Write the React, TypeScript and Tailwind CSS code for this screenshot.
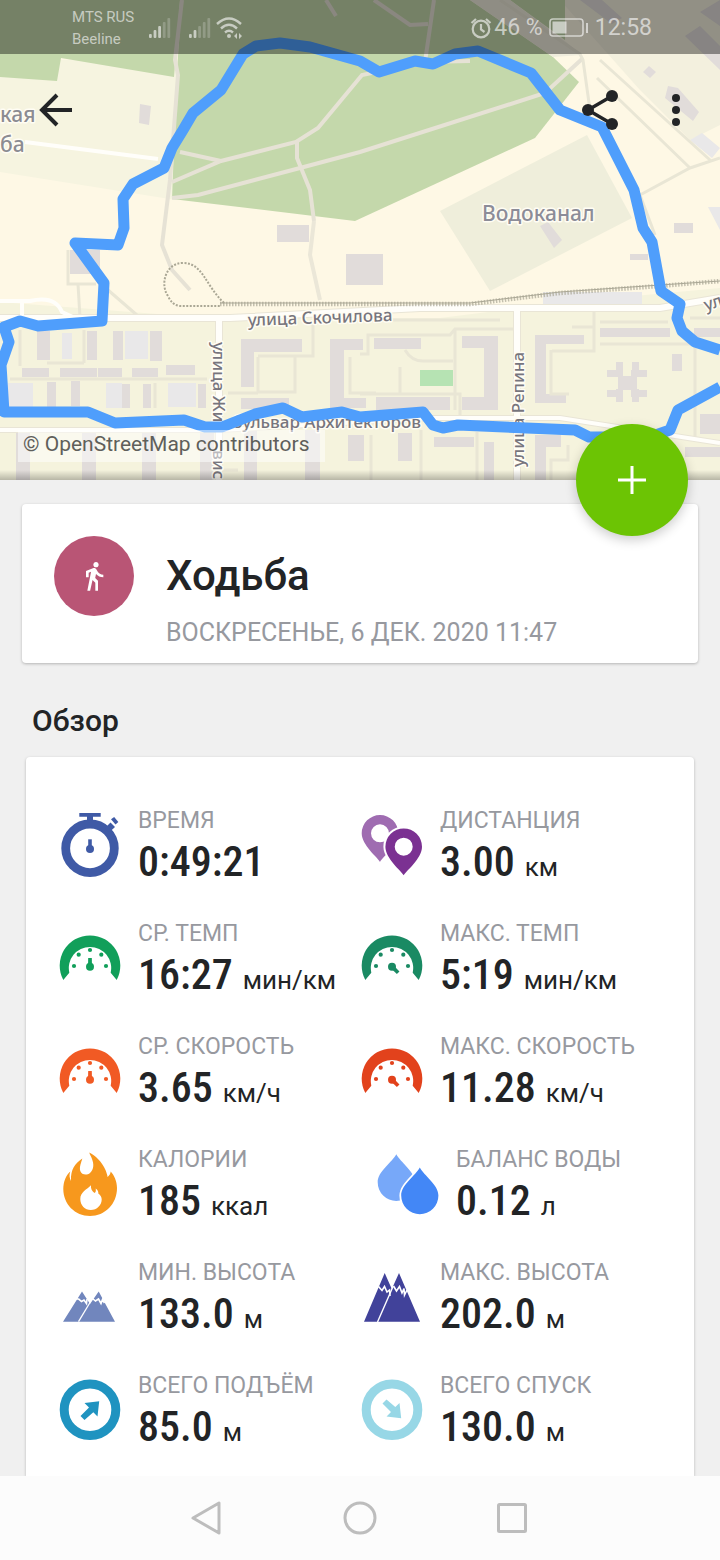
import type { ReactNode } from 'react'
import { MdDirectionsWalk } from 'react-icons/md'

type Stat = {
  label: string
  value: string
  unit?: string
  icon: ReactNode
  indent?: boolean
}

const stats: Stat[] = [
  { label: 'ВРЕМЯ', value: '0:49:21', icon: <Stopwatch /> },
  { label: 'ДИСТАНЦИЯ', value: '3.00', unit: 'км', icon: <Pins /> },
  { label: 'СР. ТЕМП', value: '16:27', unit: 'мин/км', icon: <Gauge color="#119f5a" /> },
  { label: 'МАКС. ТЕМП', value: '5:19', unit: 'мин/км', icon: <Gauge color="#1a8a63" max /> },
  { label: 'СР. СКОРОСТЬ', value: '3.65', unit: 'км/ч', icon: <Gauge color="#f15a24" /> },
  { label: 'МАКС. СКОРОСТЬ', value: '11.28', unit: 'км/ч', icon: <Gauge color="#e2421c" max /> },
  { label: 'КАЛОРИИ', value: '185', unit: 'ккал', icon: <Flame /> },
  { label: 'БАЛАНС ВОДЫ', value: '0.12', unit: 'л', icon: <Drops />, indent: true },
  { label: 'МИН. ВЫСОТА', value: '133.0', unit: 'м', icon: <LowMountains /> },
  { label: 'МАКС. ВЫСОТА', value: '202.0', unit: 'м', icon: <HighMountains /> },
  { label: 'ВСЕГО ПОДЪЁМ', value: '85.0', unit: 'м', icon: <Slope color="#1f93c0" /> },
  { label: 'ВСЕГО СПУСК', value: '130.0', unit: 'м', icon: <Slope color="#97d7e6" down /> },
]

export default function App() {
  return (
    <div className="flex min-h-screen flex-col bg-[#f0f0f0] font-['Roboto',sans-serif] text-[#222426]">
      <header className="relative h-[480px] shrink-0">
        <RouteMap />
        <div className="relative">
          <StatusBar />
          <nav className="flex items-center pt-7 pr-5 pl-8">
            <button type="button" aria-label="Назад" className="h-14 w-12">
              <svg viewBox="0 0 48 56" className="h-14 w-12" fill="none" stroke="#222426" strokeWidth="4">
                <path d="M40 28H11M25 13L10 28L25 43" />
              </svg>
            </button>
            <button type="button" aria-label="Поделиться" className="ml-auto h-14 w-12">
              <svg viewBox="0 0 48 56" className="h-14 w-12" fill="#222426">
                <path d="M36 14L12 28L36 42" fill="none" stroke="#222426" strokeWidth="3.4" />
                <circle cx="36" cy="14" r="6" />
                <circle cx="12" cy="28" r="6" />
                <circle cx="36" cy="42" r="6" />
              </svg>
            </button>
            <button type="button" aria-label="Ещё" className="ml-7 h-14 w-12">
              <svg viewBox="0 0 48 56" className="h-14 w-12" fill="#222426">
                <circle cx="24" cy="16" r="4" />
                <circle cx="24" cy="28" r="4" />
                <circle cx="24" cy="40" r="4" />
              </svg>
            </button>
          </nav>
        </div>
        <a
          href="#copyright"
          className="absolute bottom-[18px] left-[18px] bg-white/50 pr-4 pb-1 pl-[5px] text-[21px] leading-7 text-[#5f5f5b]"
        >
          © OpenStreetMap contributors
        </a>
        <div className="absolute inset-x-0 bottom-0 h-2.5 bg-linear-to-b from-transparent to-black/25" />
        <button
          type="button"
          aria-label="Добавить"
          className="absolute right-8 -bottom-14 z-10 flex size-28 items-center justify-center rounded-full bg-[#6cc404] shadow-[0_4px_12px_rgba(0,0,0,0.2)]"
        >
          <svg viewBox="0 0 28 28" className="size-7" stroke="#fff" strokeWidth="3">
            <path d="M14 0V28M0 14H28" />
          </svg>
        </button>
      </header>

      <main className="flex flex-1 flex-col">
        <section className="mx-[22px] mt-6 flex items-start gap-8 rounded bg-white px-8 pt-8 pb-3.5 shadow-[0_1px_3px_rgba(0,0,0,0.25)]">
          <div className="flex size-20 items-center justify-center rounded-full bg-[#b95575] text-white">
            <MdDirectionsWalk className="size-8" />
          </div>
          <div className="pt-3.5">
            <h1 className="text-[42px] leading-[52px] font-medium">Ходьба</h1>
            <p className="mt-3.5 text-[25px] leading-[33px] text-[#97999f]">ВОСКРЕСЕНЬЕ, 6 ДЕК. 2020 11:47</p>
          </div>
        </section>

        <h2 className="mt-[42px] px-8 text-[30px] leading-8 font-medium">Обзор</h2>

        <section className="mx-[26px] mt-5 flex-1 rounded-t bg-white px-8 pt-[49px] shadow-[0_1px_3px_rgba(0,0,0,0.25)]">
          <dl className="grid grid-cols-2 gap-y-[33px]">
            {stats.map((stat) => (
              <StatCell key={stat.label} stat={stat} />
            ))}
          </dl>
        </section>
      </main>

      <footer className="relative flex h-[84px] shrink-0 items-center justify-center gap-[104px] bg-[#fcfcfc]">
        <button type="button" aria-label="Назад" className="size-12">
          <svg viewBox="0 0 48 48" className="size-12" fill="none" stroke="#bdbdbd" strokeWidth="3" strokeLinejoin="round">
            <path d="M35 9V39L9 24Z" />
          </svg>
        </button>
        <button type="button" aria-label="Домой" className="size-12">
          <svg viewBox="0 0 48 48" className="size-12" fill="none" stroke="#bdbdbd" strokeWidth="3">
            <circle cx="24" cy="24" r="15" />
          </svg>
        </button>
        <button type="button" aria-label="Недавние" className="size-12">
          <svg viewBox="0 0 48 48" className="size-12" fill="none" stroke="#bdbdbd" strokeWidth="3">
            <rect x="10.5" y="10.5" width="27" height="27" rx="1" />
          </svg>
        </button>
      </footer>
    </div>
  )
}

function StatCell({ stat }: { stat: Stat }) {
  return (
    <div className={stat.indent ? 'flex gap-4 pl-4' : 'flex gap-4'}>
      <div className="w-16 shrink-0">{stat.icon}</div>
      <div className="whitespace-nowrap">
        <dt className="text-[23px] leading-[30px] text-[#97999f]">{stat.label}</dt>
        <dd className="mt-0.5 flex h-12 items-baseline gap-2.5 leading-[48px]">
          <span className="font-['Roboto_Condensed','Liberation_Sans_Narrow',sans-serif] text-[42px] font-medium">
            {stat.value}
          </span>
          {stat.unit && <span className="text-[26px]">{stat.unit}</span>}
        </dd>
      </div>
    </div>
  )
}

function StatusBar() {
  return (
    <div className="flex h-[54px] items-center bg-black/40 pt-0.5 pr-[68px] pl-[72px] text-white/60">
      <div className="text-[15px] leading-[22px]">
        <p>MTS RUS</p>
        <p>Beeline</p>
      </div>
      <Signal bars={3} className="ml-3.5 h-6 w-6" />
      <Signal bars={2} className="ml-4 h-6 w-6" />
      <svg viewBox="0 0 28 24" className="ml-1 h-6 w-7" fill="none" stroke="currentColor" strokeWidth="2.4">
        <path d="M1 8Q13 -3 25 8M5 12.500Q13 5 21 12.500M9 16.500Q13 13 17 16.500" />
        <circle cx="13" cy="20" r="2" fill="currentColor" stroke="none" />
        <path d="M18 20l3-3v6zM26 20l-3-3v6z" fill="currentColor" stroke="none" />
      </svg>
      <svg viewBox="0 0 22 22" className="ml-auto size-[22px]" fill="none" stroke="currentColor" strokeWidth="2.2">
        <circle cx="11" cy="12" r="8.300" />
        <path d="M11 7V12.500L14.500 15M1.500 6L6 2M20.500 6L16 2" />
      </svg>
      <span className="ml-0.5 text-[23px] leading-7">46 %</span>
      <svg viewBox="0 0 40 20" className="ml-1.5 h-5 w-10" fill="none" stroke="currentColor" strokeWidth="1.6">
        <rect x="1" y="1" width="33" height="17" rx="3" />
        <rect x="3.500" y="3.500" width="14" height="12" fill="currentColor" stroke="none" />
        <path d="M38 5V15" strokeWidth="2" />
      </svg>
      <span className="ml-1.5 text-[23px] leading-7">12:58</span>
    </div>
  )
}

function Signal({ bars, className }: { bars: number; className: string }) {
  return (
    <svg viewBox="0 0 24 24" className={className} fill="currentColor">
      {[4, 8, 12, 16, 20].map((height, i) => (
        <rect key={height} x={1 + i * 4.6} y={22 - height} width="2.8" height={height} rx="1" opacity={i < bars ? 1 : 0.35} />
      ))}
    </svg>
  )
}

function Icon({ children }: { children: ReactNode }) {
  return (
    <svg viewBox="0 0 64 80" className="h-20 w-16">
      {children}
    </svg>
  )
}

function Stopwatch() {
  return (
    <Icon>
      <g fill="#3f5aa6">
        <circle cx="32" cy="42.300" r="24.300" fill="none" stroke="#3f5aa6" strokeWidth="8.800" />
        <path d="M21.300 7H42.700V10.800H35V18H29V10.800H21.300Z" />
        <path d="M47 22L52.500 16.500L57 21L51 26.500Z" />
        <path d="M53 13.300L56.200 11L60.300 16L57.500 18.600Z" />
        <path d="M30.200 33.300H33.800V40H30.200Z" />
        <circle cx="32" cy="43" r="4" />
      </g>
    </Icon>
  )
}

const PIN = 'M0 28.600C-2 24.500 -18.300 12 -18.300 0A18.300 18.300 0 0 1 18.300 0C18.300 12 2 24.500 0 28.600ZM0 -9A9 9 0 1 0 0 9A9 9 0 1 0 0 -9Z'

function Pins() {
  return (
    <Icon>
      <path d={PIN} transform="translate(20 27.300)" fill="#9f6cb1" fillRule="evenodd" />
      <path
        d="M0 28.600C-2 24.500 -18.300 12 -18.300 0A18.300 18.300 0 0 1 18.300 0C18.300 12 2 24.500 0 28.600Z"
        transform="translate(43.700 40.700)"
        fill="#fff"
        stroke="#fff"
        strokeWidth="4"
      />
      <path d={PIN} transform="translate(43.700 40.700)" fill="#7b3192" fillRule="evenodd" />
    </Icon>
  )
}

function Gauge({ color, max }: { color: string; max?: boolean }) {
  return (
    <Icon>
      <g fill={color}>
        <path d="M5.300 61A30.300 30.300 0 1 1 58.700 61L52.700 53.700A21.200 21.200 0 1 0 11.300 53.700Z" />
        <circle cx="16" cy="47" r="2.100" />
        <circle cx="20.700" cy="35.700" r="2.100" />
        <circle cx="32" cy="31" r="2.100" />
        <circle cx="43.300" cy="35.700" r="2.100" />
        <circle cx="48" cy="47" r="2.100" />
        <circle cx="32" cy="47.700" r="4" />
        <path d="M30.200 39H33.800L34 47H30Z" transform={max ? 'rotate(135 32 47.700)' : undefined} />
      </g>
    </Icon>
  )
}

function Flame() {
  return (
    <Icon>
      <path
        d="M31.300 7.500C37 10 44 17 47.500 25C48.500 28 49.500 30 49.500 32C51.500 30.500 52.500 28.500 52.700 26.500C56 30 59 36 59 43C59 59 47 71 32 71C17 71 5.300 59 5.300 44C5.300 37 8 30 12.300 26.500C11 30 11.500 33 13 36C12.500 24 17 18.500 24.300 13.500C23.500 17 21 22 22.300 26C23.500 30 29 30.500 32 28C36 24.500 36 19 34 14C33.300 11.500 31.800 10 31.300 7.500Z"
        fill="#f7981d"
      />
      <path
        d="M33 40.300C32.500 43.500 34 46.500 36.500 48C38 47 38 45.500 37.700 43.500C40 45 40.500 47 40.300 48.500C42.500 50 43.700 52 43.700 54.500C43.700 60 39 65 32.700 65C27 65 22.300 60.500 22.300 54C22.300 47 29 44.500 33 40.300Z"
        fill="#fff"
      />
    </Icon>
  )
}

const DROP = 'M0 -28C4 -20 18.600 -11 18.600 0A18.600 18.600 0 0 1 -18.600 0C-18.600 -11 -4 -20 0 -28Z'

function Drops() {
  return (
    <Icon>
      <path d={DROP} transform="translate(20.300 37.300)" fill="#77a8f9" />
      <path d={DROP} transform="translate(43.800 50.600)" fill="#4387f6" stroke="#fff" strokeWidth="3.600" paintOrder="stroke" />
    </Icon>
  )
}

function LowMountains() {
  return (
    <Icon>
      <path d="M5 63.700L24 33.500L32 46L40.700 33.500L57 63.700Z" fill="#7186bd" />
      <g fill="none" stroke="#fff">
        <path d="M20.500 63.700L32 44.500" strokeWidth="1.300" />
        <path d="M17.500 40.500L21 41.300L23.500 43.500L26 42L28.500 45.500L29 41" strokeWidth="1.600" />
        <path d="M34.500 40.500L37.500 43L40.500 41L43 45.500L44.500 41.500L46.500 45" strokeWidth="1.600" />
      </g>
    </Icon>
  )
}

function HighMountains() {
  return (
    <Icon>
      <path d="M4 63.700L24.700 15L31.800 31L39 15L60 63.700Z" fill="#41429a" />
      <g fill="none" stroke="#fff">
        <path d="M17.500 64L33 28.500" strokeWidth="1.400" />
        <path d="M18.500 28.500L22 32.500L24.500 28.500L27 34L29.500 32L30 38" strokeWidth="1.600" />
        <path d="M33.500 28L36.500 33L39.500 28.500L42 35L44 30.500L44.500 37L47 32" strokeWidth="1.600" />
      </g>
    </Icon>
  )
}

function Slope({ color, down }: { color: string; down?: boolean }) {
  return (
    <Icon>
      <g transform={down ? 'matrix(1 0 0 -1 0 77.400)' : undefined}>
        <circle cx="32" cy="38.700" r="25.800" fill="none" stroke={color} strokeWidth="9" />
        <path d="M41.200 30.200L39.500 45.500L35.300 41.300L26.500 49L22.500 45L31 36.500L26.500 32Z" fill={color} />
      </g>
    </Icon>
  )
}

// x, y, width, height
const BUILDINGS = [
  [277, 225, 32, 17], [346, 254, 37, 31], [70, 250, 30, 24], [37, 331, 13, 29], [87, 331, 10, 29], [113, 331, 10, 29],
  [150, 331, 12, 30], [22, 368, 27, 9], [60, 368, 37, 9], [98, 368, 24, 9], [132, 368, 26, 9], [166, 365, 29, 10],
  [47, 382, 9, 25], [71, 381, 9, 25], [122, 384, 8, 24], [143, 384, 8, 24], [198, 384, 8, 24], [16, 430, 14, 50],
  [82, 430, 14, 50], [142, 430, 14, 50], [200, 430, 14, 50], [244, 430, 13, 50], [305, 430, 15, 50], [348, 435, 16, 26],
  [241, 339, 61, 13], [241, 339, 13, 48], [241, 398, 48, 11], [330, 339, 33, 11], [330, 339, 14, 68], [330, 398, 36, 10],
  [374, 338, 47, 11], [462, 336, 36, 12], [484, 336, 14, 74], [462, 397, 36, 13], [376, 397, 74, 13], [535, 335, 49, 9],
  [535, 335, 11, 68], [535, 394, 31, 9], [600, 328, 70, 9], [694, 328, 26, 9], [672, 354, 10, 17], [700, 414, 20, 20],
  [685, 447, 35, 10], [398, 433, 14, 28], [434, 437, 40, 10], [484, 442, 10, 38], [535, 435, 11, 45], [535, 435, 26, 12],
  [607, 370, 16, 7], [631, 370, 16, 7], [607, 390, 16, 7], [631, 390, 16, 7], [616, 362, 7, 14], [632, 362, 7, 14],
  [616, 389, 7, 13], [632, 389, 7, 13], [618, 376, 19, 14], [674, 223, 19, 10], [630, 254, 18, 6],
]

const LIGHT_BUILDINGS = [
  [125, 331, 23, 28], [62, 333, 10, 26], [8, 383, 25, 25], [106, 383, 16, 25], [168, 383, 28, 24], [543, 292, 99, 12],
]

function RouteMap() {
  return (
    <svg viewBox="0 0 720 480" preserveAspectRatio="xMidYMid slice" className="absolute inset-0 h-full w-full">
      <rect width="720" height="480" fill="#fef8e5" />
      <path d="M0 60H176V200L0 172Z" fill="#f6f4e0" />
      <path d="M0 302L210 318H440L560 303L720 288V480H0Z" fill="#f5f3dd" />
      <path d="M560 0H720V125L690 140L640 90Z" fill="#f3f0de" />
      <path d="M440 211L587 135L632 218L490 291Z" fill="#efeedb" />
      <g fill="#c4d8ab">
        <path d="M0 0H180L174 77L61 58L57 81L0 77Z" />
        <path d="M182 0H470L553 57L579 82L535 138L355 221L172 199L177 70Z" />
        <path d="M510 0H565V40Z" />
      </g>
      <path d="M470 0H510L566 42L582 55L553 57Z" fill="#efecdc" />

      <g fill="#e1dcda">
        {BUILDINGS.map(([x, y, w, h]) => (
          <rect key={`${x}-${y}-${w}`} x={x} y={y} width={w} height={h} />
        ))}
        <path d="M140 104L151 106L149 125L139 123ZM668 86L678 88L699 112L693 121L665 98ZM580 0H602L622 18L612 24ZM685 36L700 26L720 46V70ZM700 12L720 0V26ZM649 66L656 72L650 78L643 72ZM540 226L548 222L562 240L554 248Z" />
      </g>
      <g fill="#e9e8e9">
        {LIGHT_BUILDINGS.map(([x, y, w, h]) => (
          <rect key={`${x}-${y}`} x={x} y={y} width={w} height={h} />
        ))}
        <path d="M690 140L702 133L720 148L712 158ZM708 207H720V230Z" />
      </g>
      <rect x="420" y="370" width="33" height="16" fill="#b6e3b3" />

      {/* footpaths */}
      <g fill="none" stroke="#e6e2d5" strokeWidth="4">
        <path d="M182 0L175 60L178 75L170 180L162 245L172 270L190 290" />
        <path d="M172 182L221 161L296 142L318 128L362 75L425 62" />
        <path d="M180 152L221 161M172 198L198 195L300 168L360 152L545 93L582 59" />
        <path d="M297 142V158L310 190L314 221" />
        <path d="M314 221L310 255L320 300" stroke="#ebe7d8" />
        <path d="M326 0L336 16M374 0L410 25L428 24M434 0L425 62L470 61" />
      </g>
      <g fill="none" stroke="#e9e6d5" strokeWidth="3">
        <path d="M500 0L580 54L583 60L590 110M600 60L710 160M597 78L690 168M640 195L690 168L720 158M640 195L655 235" />
        <path d="M68 250V284H96M108 290L138 316M78 284L80 318M10 379H207M20 330V366M47 363H84M84 330V363M155 383V408" />
        <path d="M258 357V392H295V356H258M228 393H258M313 320V356H295M350 357V393H376" />
        <path d="M360 354H368V335H450L455 329H515M455 329V410M360 394H460V415M400 367V393M405 350Q412 362 425 361H453" />
        <path d="M551 350V394H569M552 351H594V310M572 327H594M600 322H668M600 344H695V440M690 318H720M365 320H500" />
        <path d="M371 435V480M421 430V480M477 432V480M210 470H238M551 480V460H568V445" />
      </g>

      {/* streets */}
      <g fill="none" stroke="#e9e5d6" strokeWidth="8">
        <path d="M0 318H230L420 308H660L720 298M219 318V480M517 308V480" />
        <path d="M0 430H220L430 418H560L720 443" strokeWidth="6" />
      </g>
      <g fill="none" stroke="#fffefa" strokeWidth="6">
        <path d="M0 318H230L420 308H660L720 298M219 318V480M517 308V480" />
        <path d="M0 301L30 301Q55 295 62 312L75 318M22 302V318M25 142L158 159" strokeWidth="4" />
        <path d="M0 430H220L430 418H560L720 443" strokeWidth="4" />
      </g>

      {/* railway */}
      <g fill="none" stroke="#aaa795">
        <path d="M224 303C205 285 203 263 183 263C165 263 160 285 168 296Q172 305 180 306H220" strokeWidth="2" strokeDasharray="2 1.500" />
        <path d="M220 304H470L560 293L660 286L720 281" strokeWidth="4.500" strokeDasharray="1.500 1.500" opacity="0.7" />
        <path d="M220 303H470L560 292L660 285L720 281" strokeWidth="1" />
      </g>

      <g
        className="font-['Noto_Sans',sans-serif]"
        fill="#77757d"
        fontSize="17"
        fontWeight="500"
        stroke="#fffdf4"
        strokeWidth="3"
        strokeLinejoin="round"
        paintOrder="stroke"
      >
        <text x="482" y="221" fontSize="21" fill="#8c8c98">Водоканал</text>
        <text x="0" y="122" fontSize="21" fill="#8c8c92">кая</text>
        <text x="0" y="152" fontSize="21" fill="#8c8c92">ба</text>
        <text transform="translate(248 326) rotate(-2)">улица Скочилова</text>
        <text transform="translate(213 342) rotate(90)">улица Жи</text>
        <text transform="translate(213 450) rotate(90)">вис</text>
        <text transform="translate(524 467) rotate(-90)">улица Репина</text>
        <text x="421" y="428" textAnchor="end">бульвар Архитекторов</text>
        <text transform="translate(706 311) rotate(-18)">ул</text>
      </g>

      <g fill="none" stroke="#4f9efc" strokeWidth="11" strokeLinejoin="round">
        <path d="M720 350L695 342L682 331L677 318L680 304L661 291L652 242L643 228L634 190L602 127L560 110L531 73L478 51L455 54L433 64L415 61L379 72L360 61L310 47L280 43L256 46L243 54L221 90L193 113L183 130L172 148L164 168L133 184L123 199L124 228L118 245L75 243L104 283L102 321L38 326L20 321L4 327L9 342L1 365L4 412H88L115 423L184 420L205 427H222L255 414L283 408L302 417L342 412L360 417L423 412L433 425L443 428L458 425L575 430L589 437H650L670 430L678 410L720 387" />
      </g>
    </svg>
  )
}
